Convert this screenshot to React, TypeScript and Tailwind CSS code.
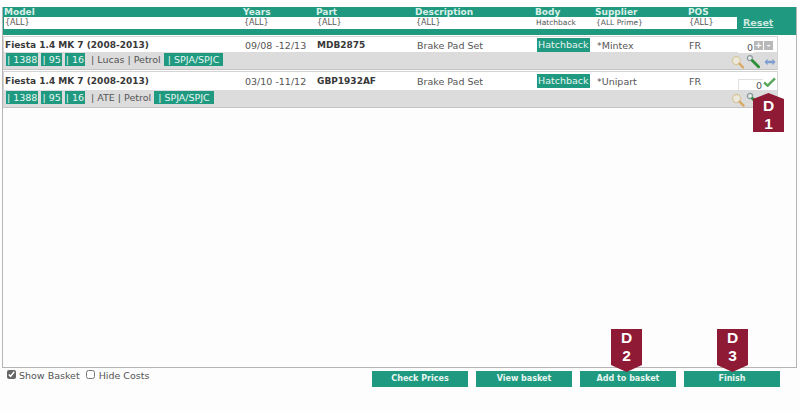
const FONT = "font-['DejaVu_Sans',sans-serif]";
const COLS = "grid grid-cols-[240px_73px_99px_120px_60px_93px_49px_1fr]";

function Tag({ children, wide }: { children: React.ReactNode; wide?: boolean }) {
  return <span className={`bg-[#1f9a80] text-[#e8f5f1] h-[13px] leading-[13px] inline-block whitespace-nowrap ${wide ? "px-[4px]" : "px-[1px]"}`}>{children}</span>;
}

function Marker({ l, n, className }: { l: string; n: string; className: string }) {
  return (
    <div
      className={`absolute w-[31px] bg-[#8f1a35] text-white font-bold text-[15.5px] leading-[18px] text-center font-['Liberation_Sans',sans-serif] ${className}`}
    >
      <div>{l}</div>
      <div>{n}</div>
    </div>
  );
}

function Glass() {
  return (
    <svg width="14" height="14" viewBox="0 0 15 15" fill="none">
      <circle cx="6" cy="6" r="4.4" stroke="#d8c8a0" strokeWidth="1.4" fill="#ece8dc" />
      <path d="M9.2 9.2 13.5 13.5" stroke="#d8a860" strokeWidth="2.4" strokeLinecap="round" />
    </svg>
  );
}

function Wrench() {
  return (
    <svg width="15" height="15" viewBox="0 0 15 15" fill="none">
      <circle cx="4" cy="4" r="2.6" stroke="#8a9a9a" strokeWidth="1.3" fill="#e6ecec" />
      <path d="M6.5 6.5 13 13" stroke="#2f8f3a" strokeWidth="3" strokeLinecap="round" />
    </svg>
  );
}

function Arrows() {
  return (
    <svg width="14" height="8" viewBox="0 0 14 10" fill="#7f9fd0">
      <path d="M0 5 4 1V3.5H10V1L14 5 10 9V6.5H4V9Z" />
    </svg>
  );
}

function Row({ part, supplier, years, engine, extra, check }: { part: string; supplier: string; years: string; engine: string; extra: string; check?: boolean }) {
  return (
    <div className="w-[775px] mb-[1px] border border-[#d4d4d4] border-b-[#c4c4c4]">
      <div className={`${COLS} ${check ? "h-[18px]" : "h-[15px]"} items-center bg-white text-[9.5px] text-[#555]`}>
        <div className="pl-[1px] pt-[2px] text-[9px] font-bold text-[#383838] whitespace-nowrap">Fiesta 1.4 MK 7 (2008-2013)</div>
        <div className="pl-[1px] pt-[2px]">{years}</div>
        <div className="pt-[2px] text-[9px] font-bold text-[#383838]">{part}</div>
        <div className="pl-[1px] pt-[2px]">Brake Pad Set</div>
        <div className="pl-[1px]"><span className="bg-[#1f9a80] text-[#e8f5f1] px-[1px] h-[14px] leading-[14px] inline-block">Hatchback</span></div>
        <div className="pl-[1px] pt-[2px]">*{supplier}</div>
        <div className="pt-[2px]">FR</div>
        <div className="flex items-end justify-start h-full">
          <div className={`bg-white h-[11px] text-right leading-[11px] ${check ? "w-[25px] border-t border-l border-[#e0e0e0]" : "w-[16px]"} pr-[1px]`}>0</div>
          {check ? (
            <svg width="13" height="10" viewBox="0 0 14 11" className="self-start mt-[5px]"><path d="M1 6 5 9.5 13 1.5" stroke="#5da85f" strokeWidth="2.8" fill="none" /></svg>
          ) : (
            <div className="flex gap-[1px] self-start mt-[4px]">
              <span className="w-[9px] h-[9px] bg-[#b8b8b8] text-white text-[9px] leading-[9px] text-center font-bold">+</span>
              <span className="w-[9px] h-[9px] bg-[#b8b8b8] text-white text-[9px] leading-[9px] text-center font-bold">-</span>
            </div>
          )}
        </div>
      </div>
      <div className="h-[17px] bg-[#dcdcdc] flex items-start justify-between text-[9.5px] text-[#555]">
        <div className="flex items-start gap-[3px] pl-[2px] pt-[1px]">
          <Tag>| 1388</Tag><Tag>| 95</Tag><Tag>| 16</Tag>
          <span className="leading-[13px] whitespace-pre">{` | ${engine} | ${extra}`}</span>
          <Tag wide>| SPJA/SPJC</Tag>
        </div>
        <div className="flex items-center gap-[1px] pt-[2px] w-[47px] pl-[1px]">
          <Glass /><Wrench />{!check && <span className="ml-[2px] flex"><Arrows /></span>}
        </div>
      </div>
    </div>
  );
}

function Filter({ children, small }: { children: React.ReactNode; small?: boolean }) {
  return <div className={`${small ? "text-[7.5px]" : "text-[8px]"} leading-[12px] text-[#555] pl-[1px] whitespace-nowrap`}>{children}</div>;
}

function Btn({ children }: { children: React.ReactNode }) {
  return <button className="w-[96px] h-[16px] bg-[#1f9a80] text-[#e8f5f1] text-[8px] font-bold leading-[16px] text-center">{children}</button>;
}

export default function App() {
  return (
    <div className={`relative w-[800px] h-[412px] bg-[#fdfdfe] overflow-hidden pt-[7px] ${FONT}`}>
      <div className="ml-[2px] w-[795px] h-[361px] border border-t-0 border-[#b5b5b5]">
        <div className="bg-[#1f9a80] h-[28px] mb-[1px] flex flex-col">
          <div className={`${COLS} h-[10px] text-[9px] leading-[10px] font-bold text-[#d8f0e8]`}>
            <div className="pl-[1px]">Model</div>
            <div>Years</div>
            <div>Part</div>
            <div>Description</div>
            <div>Body</div>
            <div>Supplier</div>
            <div>POS</div>
            <div />
          </div>
          <div className="flex h-[13px] items-start">
            <div className="grid grid-cols-[239px_73px_99px_120px_60px_93px_49px] ml-[1px] bg-white w-[733px]">
              <Filter>{"{ALL}"}</Filter>
              <Filter>{"{ALL}"}</Filter>
              <Filter>{"{ALL}"}</Filter>
              <Filter>{"{ALL}"}</Filter>
              <Filter small>Hatchback</Filter>
              <Filter small>{"{ALL Prime}"}</Filter>
              <Filter>{"{ALL}"}</Filter>
            </div>
            <div className="ml-[6px] text-[9.5px] leading-[12px] font-bold underline text-[#cfe9e1]">Reset</div>
          </div>
        </div>
        <Row years="09/08 -12/13" part="MDB2875" supplier="Mintex" engine="Lucas" extra="Petrol" />
        <Row years="03/10 -11/12" part="GBP1932AF" supplier="Unipart" engine="ATE" extra="Petrol" check />
      </div>
      <div className="flex items-start justify-between ml-[7px] mr-[20px]">
        <div className="flex items-center text-[9.5px] text-[#555] h-[16px]">
          <input type="checkbox" defaultChecked className="w-[9px] h-[9px] accent-[#666] m-0 mr-[3px] -mt-[3px]" />
          <span className="mr-[6px]">Show Basket</span>
          <input type="checkbox" className="w-[9px] h-[9px] m-0 mr-[4px] -mt-[3px]" />
          <span>Hide Costs</span>
        </div>
        <div className="flex gap-[8px] mt-[3px]">
          <Btn>Check Prices</Btn>
          <Btn>View basket</Btn>
          <Btn>Add to basket</Btn>
          <Btn>Finish</Btn>
        </div>
      </div>
      <Marker l="D" n="1" className="left-[753px] top-[93px] h-[39px] pt-[4px] [clip-path:polygon(0_6px,50%_0,100%_6px,100%_100%,0_100%)]" />
      <Marker l="D" n="2" className="left-[611px] top-[329px] h-[43px] [clip-path:polygon(0_0,100%_0,100%_36px,50%_100%,0_36px)]" />
      <Marker l="D" n="3" className="left-[717px] top-[329px] h-[43px] [clip-path:polygon(0_0,100%_0,100%_36px,50%_100%,0_36px)]" />
    </div>
  );
}
